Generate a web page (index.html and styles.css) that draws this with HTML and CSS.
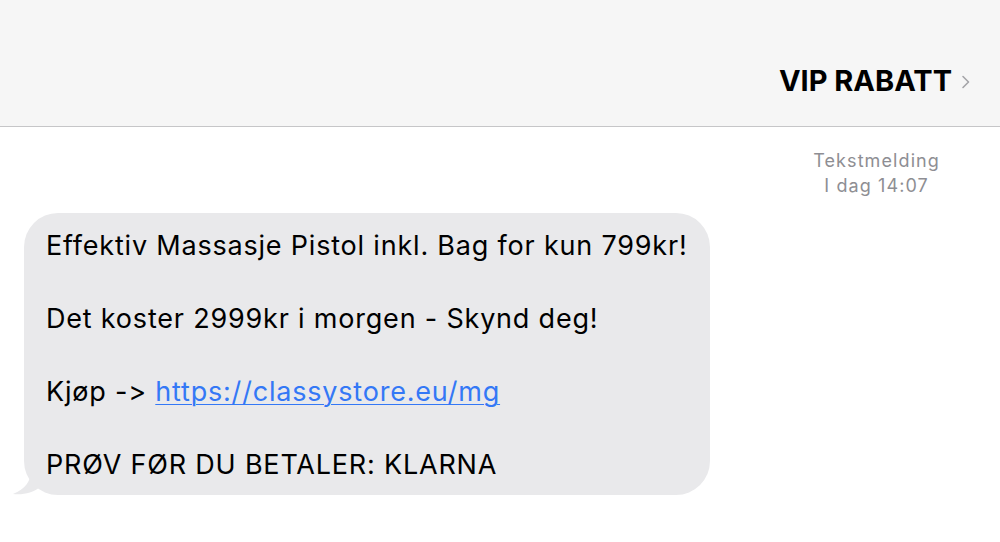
FILE: index.html
```html
<!DOCTYPE html>
<html lang="no">
<head>
    <meta charset="UTF-8">
    <meta name="viewport" content="width=device-width, initial-scale=1.0">
    <title>VIP RABATT</title>
    <link rel="stylesheet" href="styles.css">
</head>
<body>

    <header class="topbar">
        <div class="contact">
            <span class="contact-name">VIP RABATT</span>
            <svg class="chevron" width="10" height="14" viewBox="0 0 10 14">
                <path d="M2 1.5 L7.5 7 L2 12.5" fill="none" stroke="#a4a4a8" stroke-width="1.6" stroke-linecap="round" stroke-linejoin="round"/>
            </svg>
        </div>
    </header>

    <main class="thread">
        <div class="stamp">
            <div>Tekstmelding</div>
            <div>I dag 14:07</div>
        </div>

        <div class="bubble">
            <p>Effektiv Massasje Pistol inkl. Bag for kun 799kr!</p>
            <p>Det koster 2999kr i morgen - Skynd deg!</p>
            <p>Kjøp -&gt; <a href="#">https://classystore.eu/mg</a></p>
            <p>PRØV FØR DU BETALER: KLARNA</p>
            <svg class="tail" width="30" height="24" viewBox="0 0 30 24">
                <path d="M30 0 L18 0 C18 10 12 18 0 23 C10 24 20 22 27 16 Z" fill="#e9e9eb"/>
            </svg>
        </div>
    </main>

</body>
</html>
```

FILE: styles.css
```css
body {
    margin: 0;
    font-family: Inter, "Liberation Sans", sans-serif;
    background-color: #fff;
    color: #000;
}

.topbar {
    height: 127px;
    background-color: #f6f6f6;
    border-bottom: 1px solid #c6c6c8;
    display: flex;
    justify-content: flex-end;
    align-items: flex-start;
    padding-right: 29px;
    box-sizing: border-box;
}

.contact {
    display: flex;
    align-items: center;
    gap: 9px;
    margin-top: 63px;
}

.contact-name {
    font-size: 29px;
    font-weight: 700;
}

.chevron {
    margin-top: 2px;
}

.thread {
    display: flex;
    flex-direction: column;
}

.stamp {
    align-self: flex-end;
    margin: 21px 60px 0 0;
    text-align: center;
    color: #8e8e93;
    font-size: 18px;
    line-height: 25px;
    letter-spacing: 1.1px;
}

.bubble {
    position: relative;
    align-self: flex-start;
    margin: 15px 0 0 24px;
    padding: 15px 20px 11px 22px;
    width: 686px;
    box-sizing: border-box;
    background-color: #e9e9eb;
    border-radius: 34px;
    font-size: 27px;
    line-height: 36.5px;
    letter-spacing: 0.8px;
}

.bubble p {
    margin: 0 0 36.5px;
    white-space: nowrap;
}

.bubble p:last-of-type {
    margin-bottom: 0;
}

.bubble a {
    color: #3478f6;
    text-decoration: underline;
    text-decoration-thickness: 1px;
    text-underline-offset: 3px;
}

.tail {
    position: absolute;
    left: -11px;
    bottom: 0;
}
```
